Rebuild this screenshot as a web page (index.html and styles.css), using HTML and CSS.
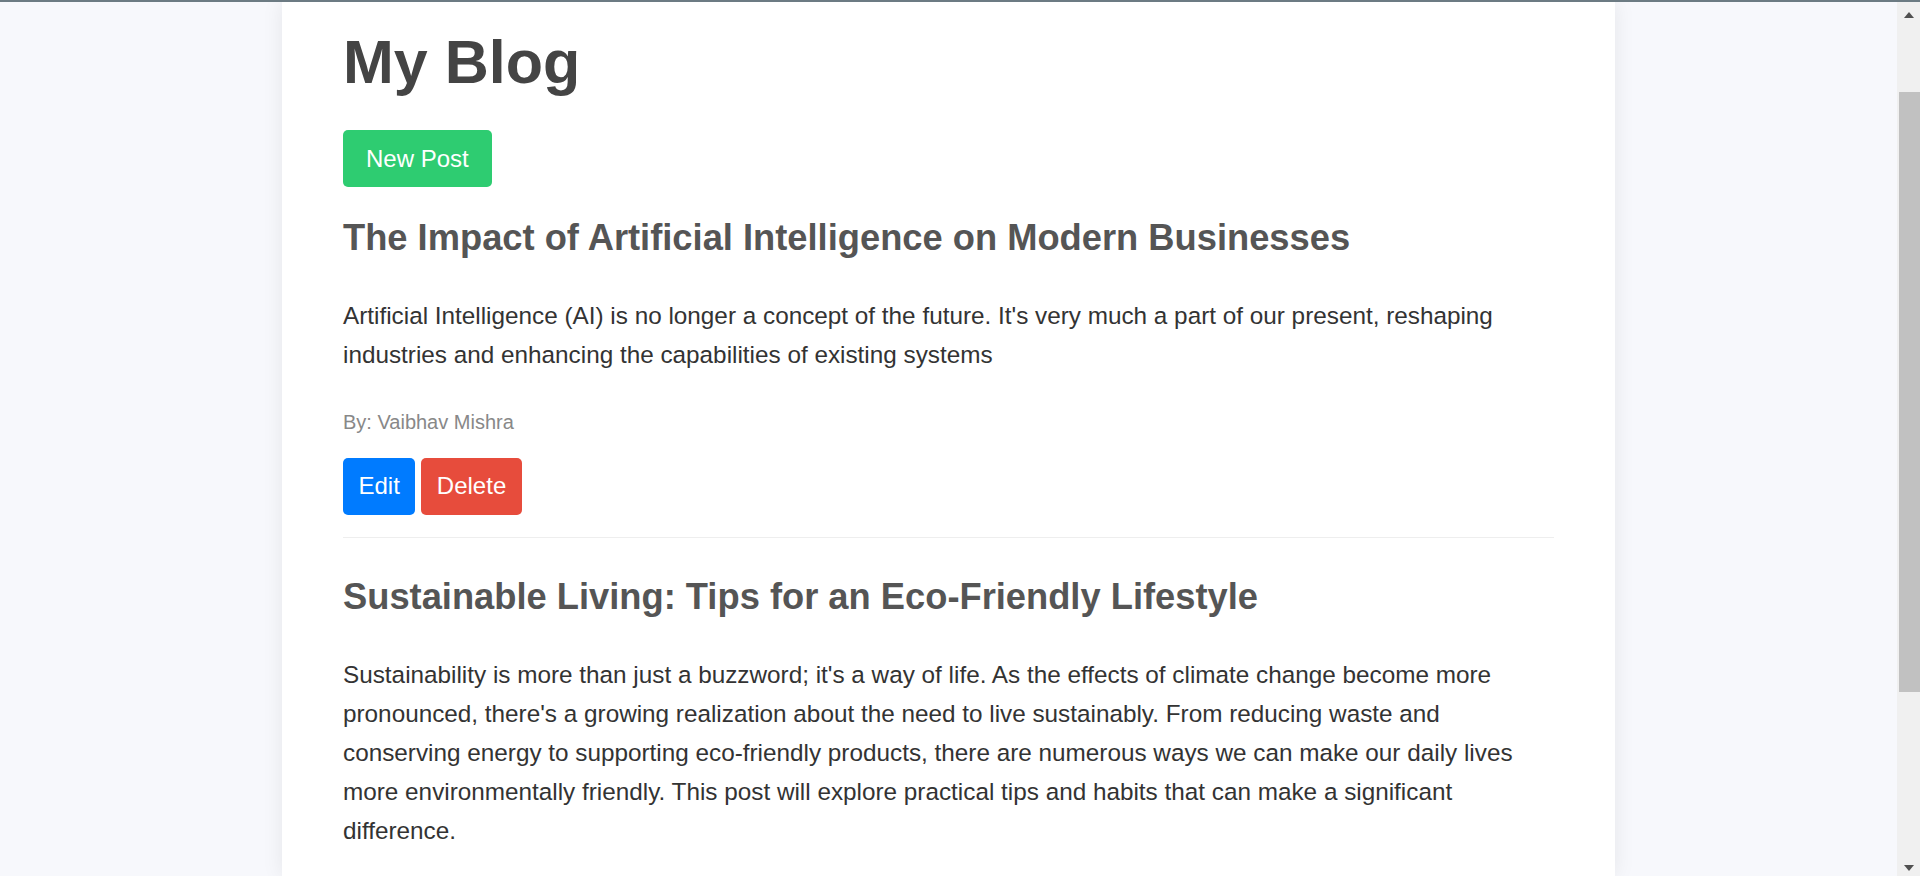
FILE: index.html
```html
<!DOCTYPE html>
<html lang="en">
<head>
<meta charset="utf-8">
<title>My Blog</title>
<link rel="stylesheet" href="styles.css">
</head>
<body>
<div class="topline"></div>
<div class="frame">
  <main class="viewport">
    <div class="container">
      <h1 class="site-title">My Blog</h1>
      <button class="btn btn-new">New Post</button>
      <article class="post">
        <h2 class="post-title">The Impact of Artificial Intelligence on Modern Businesses</h2>
        <p class="post-body">Artificial Intelligence (AI) is no longer a concept of the future. It's very much a part of our present, reshaping industries and enhancing the capabilities of existing systems</p>
        <p class="post-author">By: Vaibhav Mishra</p>
        <div class="post-actions">
          <button class="btn btn-edit">Edit</button>
          <button class="btn btn-delete">Delete</button>
        </div>
      </article>
      <article class="post post-next">
        <h2 class="post-title">Sustainable Living: Tips for an Eco-Friendly Lifestyle</h2>
        <p class="post-body">Sustainability is more than just a buzzword; it's a way of life. As the effects of climate change become more pronounced, there's a growing realization about the need to live sustainably. From reducing waste and conserving energy to supporting eco-friendly products, there are numerous ways we can make our daily lives more environmentally friendly. This post will explore practical tips and habits that can make a significant difference.</p>
      </article>
    </div>
  </main>
  <div class="scrollbar">
    <div class="arrow arrow-up"></div>
    <div class="track"><div class="thumb"></div></div>
    <div class="arrow arrow-down"></div>
  </div>
</div>
</body>
</html>
```
FILE: styles.css
```css
html, body {
  margin: 0;
  padding: 0;
  height: 876px;
  overflow: hidden;
}
body {
  background: #f7f8fc;
  font-family: "Liberation Sans", Arial, sans-serif;
  display: flex;
  flex-direction: column;
}
.topline {
  height: 2px;
  background: #6c7b83;
  flex: none;
}
.frame {
  display: flex;
  height: 874px;
}
.viewport {
  flex: 1;
  overflow: hidden;
  display: flex;
  justify-content: center;
}
.container {
  width: 1333px;
  box-sizing: border-box;
  flex: none;
  background: #ffffff;
  padding: 0 61px;
  box-shadow: 0 0 20px rgba(0, 0, 0, 0.08);
  display: flex;
  flex-direction: column;
  align-items: flex-start;
}
.site-title {
  font-size: 61px;
  font-weight: bold;
  line-height: 70px;
  color: #444444;
  margin: 25px 0 33px;
}
.btn {
  font-family: "Liberation Sans", Arial, sans-serif;
  font-size: 24px;
  line-height: 28px;
  color: #ffffff;
  border: none;
  border-radius: 5px;
  padding: 14.5px 15.5px;
  cursor: pointer;
}
.btn-new {
  background: #2ecc71;
  padding: 14.5px 23px;
}
.btn-edit {
  background: #007bff;
}
.btn-delete {
  background: #e74c3c;
}
.post {
  align-self: stretch;
  border-bottom: 1px solid #eeeeee;
  padding: 30px 0 22px;
}
.post-next {
  padding-top: 38px;
  border-bottom: none;
}
.post-title {
  font-size: 36.3px;
  font-weight: bold;
  line-height: 41px;
  color: #555555;
  margin: 0 0 38.2px;
}
.post-body {
  font-size: 24.3px;
  line-height: 39px;
  color: #333333;
  margin: 0 0 36.6px;
}
.post-author {
  font-size: 20px;
  line-height: 23px;
  color: #888888;
  margin: 0 0 24px;
}
.post-actions {
  display: flex;
  gap: 6px;
}
.scrollbar {
  width: 23px;
  flex: none;
  background: #f0f0f0;
  display: flex;
  flex-direction: column;
  align-items: center;
}
.arrow {
  width: 0;
  height: 0;
  border-left: 5.5px solid transparent;
  border-right: 5.5px solid transparent;
  flex: none;
}
.arrow-up {
  border-bottom: 6px solid #505050;
  margin: 10px 0 0;
}
.arrow-down {
  border-top: 6px solid #505050;
  margin: 0 0 5px;
}
.track {
  flex: 1;
  align-self: stretch;
  padding: 74px 0 0 2px;
}
.thumb {
  height: 600px;
  background: #c1c1c1;
}
```
